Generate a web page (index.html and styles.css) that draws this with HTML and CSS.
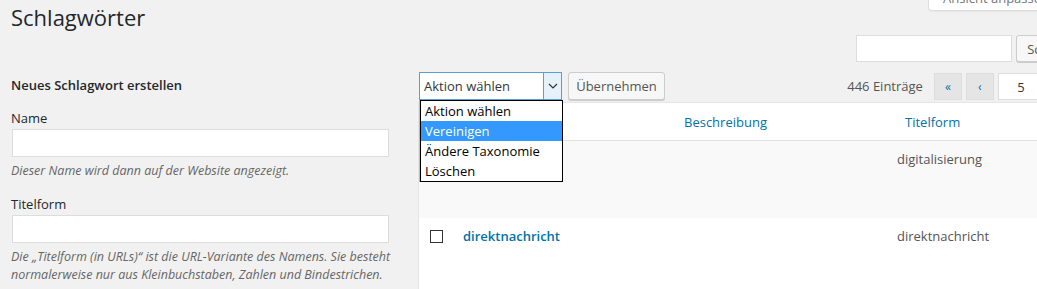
FILE: index.html
```html
<!DOCTYPE html>
<html lang="de">
<head>
  <meta charset="UTF-8">
  <title>Schlagwörter</title>
  <link rel="stylesheet" href="styles.css">
</head>
<body>
  <div class="wrap">
    <div class="page-head">
      <h1>Schlagwörter</h1>
      <button class="screen-options">Ansicht anpassen</button>
    </div>

    <form class="search-box">
      <input type="search" class="search-input">
      <button type="button" class="button">Schlagwörter durchsuchen</button>
    </form>

    <div class="columns">
      <!-- Neues Schlagwort -->
      <div class="col-left">
        <h2>Neues Schlagwort erstellen</h2>
        <div class="form-field">
          <label>Name</label>
          <input type="text">
          <p class="description">Dieser Name wird dann auf der Website angezeigt.</p>
        </div>
        <div class="form-field">
          <label>Titelform</label>
          <input type="text">
          <p class="description">Die „Titelform (in URLs)“ ist die URL-Variante des Namens. Sie besteht normalerweise nur aus Kleinbuchstaben, Zahlen und Bindestrichen.</p>
        </div>
      </div>

      <!-- Liste -->
      <div class="col-right">
        <div class="tablenav">
          <div class="bulk-actions">
            <div class="select">
              <span class="select-value">Aktion wählen</span>
              <span class="select-arrow">
                <svg width="10" height="6" viewBox="0 0 10 6"><path d="M1 1l4 4 4-4" fill="none" stroke="#333" stroke-width="1.2"/></svg>
              </span>
              <ul class="dropdown">
                <li>Aktion wählen</li>
                <li class="active">Vereinigen</li>
                <li>Ändere Taxonomie</li>
                <li>Löschen</li>
              </ul>
            </div>
            <button class="button">Übernehmen</button>
          </div>
          <div class="pagination">
            <span class="count">446 Einträge</span>
            <span class="page-btn">«</span>
            <span class="page-btn">‹</span>
            <input type="text" class="page-input" value="5">
            <span class="count">von 9</span>
            <span class="page-btn">›</span>
            <span class="page-btn">»</span>
          </div>
        </div>

        <table class="terms">
          <thead>
            <tr>
              <th class="check-col"><span class="checkbox"></span></th>
              <th class="name-col">Name</th>
              <th class="desc-col">Beschreibung</th>
              <th class="slug-col">Titelform</th>
              <th class="count-col">Anzahl</th>
            </tr>
          </thead>
          <tbody>
            <tr class="alt">
              <td class="check-col"><span class="checkbox"></span></td>
              <td class="name-col"><a class="row-title">digitalisierung</a></td>
              <td class="desc-col"></td>
              <td class="slug-col">digitalisierung</td>
              <td class="count-col">3</td>
            </tr>
            <tr>
              <td class="check-col"><span class="checkbox"></span></td>
              <td class="name-col"><a class="row-title">direktnachricht</a></td>
              <td class="desc-col"></td>
              <td class="slug-col">direktnachricht</td>
              <td class="count-col">1</td>
            </tr>
          </tbody>
        </table>
      </div>
    </div>
  </div>
</body>
</html>
```

FILE: styles.css
```css
body {
  margin: 0;
  background: #f1f1f1;
  color: #444;
  font-family: 'Open Sans', sans-serif;
  font-size: 13px;
  overflow: hidden;
}

.wrap {
  width: 1189px;
  padding-left: 11px;
}

.page-head {
  display: flex;
  justify-content: space-between;
  align-items: flex-start;
}

h1 {
  margin: 0;
  padding: 3px 0 3px;
  font-size: 22px;
  font-weight: 400;
  line-height: 29px;
  color: #23282d;
}

.screen-options {
  margin-top: -15px;
  margin-right: 128px;
  height: 26px;
  padding: 0 22px 0 14px;
  background: #fff;
  border: 1px solid #ddd;
  border-top: none;
  border-radius: 0 0 4px 4px;
  box-shadow: 0 1px 1px rgba(0, 0, 0, 0.04);
  color: #72777c;
  font-family: inherit;
  font-size: 13px;
}

.search-box {
  display: flex;
  justify-content: flex-end;
  gap: 4px;
}

.search-input {
  width: 156px;
  height: 27px;
  box-sizing: border-box;
  border: 1px solid #ddd;
  background: #fff;
  margin: 0;
}

.button {
  height: 27px;
  padding: 0 10px;
  background: #f7f7f7;
  border: 1px solid #ccc;
  border-radius: 3px;
  box-shadow: 0 1px 0 #ccc;
  color: #555;
  font-family: inherit;
  font-size: 13px;
}

.columns {
  display: flex;
  gap: 8px;
}

.col-left {
  width: 400px;
  flex-shrink: 0;
}

h2 {
  margin: 13px 0 0;
  font-size: 13px;
  font-weight: 600;
  line-height: 20px;
  color: #23282d;
}

.form-field {
  margin-top: 14px;
}

.form-field + .form-field {
  margin-top: 15px;
}

.form-field label {
  display: block;
  line-height: 18px;
  color: #23282d;
}

.form-field input {
  display: block;
  width: 377px;
  height: 28px;
  margin: 2px 0 0 1px;
  box-sizing: border-box;
  border: 1px solid #ddd;
  background: #fff;
}

.description {
  margin: 5px 0 0;
  font-style: italic;
  font-size: 12.5px;
  line-height: 18px;
  color: #666;
}

.col-right {
  flex: 1;
}

.tablenav {
  display: flex;
  justify-content: space-between;
  margin: 10px 0 2px;
  padding-right: 48px;
  height: 28px;
}

.bulk-actions {
  display: flex;
  gap: 6px;
}

.select {
  position: relative;
  width: 143px;
  height: 28px;
  box-sizing: border-box;
  border: 1px solid #5b9dd9;
  background: #fff;
  display: flex;
  align-items: center;
  justify-content: space-between;
  font-size: 13px;
  color: #32373c;
}

.select-value {
  padding-left: 4px;
}

.select-arrow {
  width: 18px;
  height: 26px;
  box-sizing: border-box;
  border-left: 1px solid #5b9dd9;
  background: #e5f1fb;
  display: flex;
  align-items: center;
  justify-content: center;
}

.bulk-actions .button {
  height: 28px;
  width: 97px;
  padding: 0;
}

.dropdown {
  position: absolute;
  top: 27px;
  left: 0;
  width: 143px;
  box-sizing: border-box;
  margin: 0;
  padding: 0;
  list-style: none;
  background: #fff;
  border: 1px solid #000;
  box-shadow: -1px 0 0 #bbb;
  color: #000;
  z-index: 2;
}

.dropdown li {
  padding: 0 4px;
  line-height: 20px;
}

.dropdown .active {
  background: #3399ff;
  color: #fff;
}

.pagination {
  display: flex;
  align-items: center;
  gap: 4px;
  color: #555;
}

.count {
  margin-right: 7px;
}

.page-btn {
  width: 28px;
  height: 27px;
  margin-top: 1px;
  box-sizing: border-box;
  border: 1px solid #ddd;
  background: #e5e5e5;
  color: #0073aa;
  display: flex;
  align-items: center;
  justify-content: center;
  font-size: 12px;
}

.page-input {
  width: 46px;
  height: 27px;
  margin: 1px 0 0;
  box-sizing: border-box;
  border: 1px solid #ddd;
  text-align: center;
  font-family: inherit;
  font-size: 13px;
  color: #32373c;
}

.terms {
  width: 100%;
  border-collapse: collapse;
  table-layout: fixed;
  background: #fff;
  border: 1px solid #e5e5e5;
  margin-left: -1px;
}

.terms th {
  height: 37px;
  padding: 0 10px;
  text-align: left;
  font-weight: 400;
  color: #0073aa;
  border-bottom: 1px solid #e1e1e1;
}

.terms td {
  height: 65px;
  padding: 9px 10px 0;
  vertical-align: top;
  color: #555;
  line-height: 18px;
}

.terms .alt td {
  background: #f9f9f9;
}

.check-col { width: 16px; }
.name-col { width: 201px; }
.desc-col { width: 193px; }
.slug-col { width: 200px; }

.terms .name-col {
  padding-left: 8px;
}

.terms th.slug-col {
  padding-left: 18px;
}

.terms td.check-col {
  padding-left: 11px;
  padding-top: 12px;
}

.checkbox {
  display: block;
  width: 13px;
  height: 13px;
  box-sizing: border-box;
  border: 1px solid #333;
  background: #fff;
}

.row-title {
  font-size: 13px;
  font-weight: 600;
  color: #0073aa;
}
```
